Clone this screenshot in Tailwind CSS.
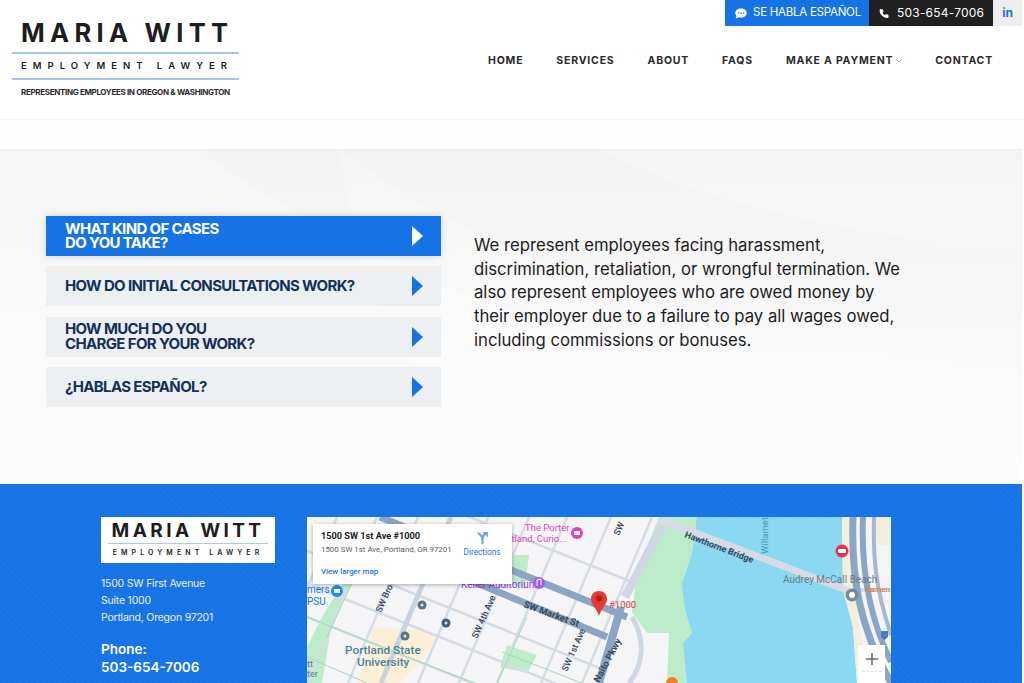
<!DOCTYPE html>
<html lang="en">
<head>
    <meta charset="UTF-8">
    <title>Maria Witt Employment Lawyer</title>
    <script src="https://cdn.jsdelivr.net/npm/@tailwindcss/browser@4"></script>
</head>
<body class="bg-white font-['Inter',sans-serif] overflow-hidden">
<div class="w-[1022px] h-[683px] overflow-hidden">

    <!-- header -->
    <header class="h-[120px] flex justify-between border-b border-[#f4f4f4]">
        <div class="pl-[12px] pt-[22px] w-[239px] shrink-0">
            <div class="h-[30px] pl-[9px] text-[25.500px] leading-[22px] font-bold tracking-[5.300px] text-[#1d1d1f] whitespace-nowrap">MARIA&nbsp;WITT</div>
            <div class="h-[28px] border-y-2 border-[#a3c4f3] pl-[9px] text-[9.500px] leading-[24px] font-semibold tracking-[6px] text-[#1d1d1f] whitespace-nowrap">EMPLOYMENT&nbsp;LAWYER</div>
            <div class="pl-[9px] pt-[6px] text-[8px] leading-[12px] font-bold text-[#2a2a2d] tracking-[-0.33px] whitespace-nowrap">REPRESENTING EMPLOYEES IN OREGON &amp; WASHINGTON</div>
        </div>
        <div class="flex flex-col items-end">
            <div class="flex h-[26px] text-white">
                <div class="w-[144px] bg-[#1673e6] flex items-center pl-[10px] gap-[6px] text-[11.500px] tracking-[-0.25px] whitespace-nowrap">
                    <svg class="w-[12px] h-[11px]" viewBox="0 0 12 11"><path fill="#fff" d="M6 0.5C2.7 0.5 0.3 2.5 0.3 5c0 1.1.5 2.1 1.3 2.9C1.4 8.8.9 9.6.3 10.2c1.3 0 2.5-.4 3.3-1 .7.3 1.5.4 2.4.4 3.3 0 5.7-2 5.7-4.6S9.3.5 6 .5z"/><circle cx="3.6" cy="5" r=".8" fill="#1673e6"/><circle cx="6" cy="5" r=".8" fill="#1673e6"/><circle cx="8.4" cy="5" r=".8" fill="#1673e6"/></svg>
                    <span>SE HABLA ESPAÑOL</span>
                </div>
                <div class="w-[124px] bg-[#202022] flex items-center pl-[10px] gap-[8px] text-[12px] tracking-[0.2px] whitespace-nowrap">
                    <svg class="w-[10px] h-[11px]" viewBox="0 0 24 24"><path fill="#fff" d="M5.500 1.500l4 .8 1.600 5.600-2.700 2.200c1.200 2.700 3.300 4.800 6 6l2.200-2.700 5.600 1.600.8 4c.2 1.500-.8 3.200-2.500 3.500C10.500 23 1 13.500 1.500 4 1.800 2.500 3.800 1.300 5.500 1.500z"/></svg>
                    <span>503-654-7006</span>
                </div>
                <div class="w-[29px] bg-[#eeeeee] flex items-center justify-center text-[12px] font-bold text-[#1673e6]">in</div>
            </div>
            <nav class="flex items-center gap-[33px] pr-[29px] pt-[27px] text-[10.500px] leading-[16px] font-bold tracking-[0.8px] text-[#29292c] whitespace-nowrap">
                <a>HOME</a>
                <a>SERVICES</a>
                <a>ABOUT</a>
                <a>FAQS</a>
                <a class="flex items-center gap-[3px]">MAKE A PAYMENT
                    <svg class="w-[6px] h-[4px]" viewBox="0 0 6 4"><path d="M.5.5 3 3 5.500.5" fill="none" stroke="#6ea4ee" stroke-width="1"/></svg>
                </a>
                <a>CONTACT</a>
            </nav>
        </div>
    </header>

    <div class="h-[29px] bg-[#fefefe]"></div>

    <!-- faq section -->
    <section class="relative h-[335px] border-t border-[#efefef] bg-gradient-to-b from-[#f3f3f3] to-[#fcfcfc]">
        <svg class="absolute inset-0 w-full h-full" viewBox="0 0 1022 334" preserveAspectRatio="none">
            <path fill="#ffffff" fill-opacity=".25" d="M0 0H200C320 90 560 210 1022 300V334H0Z"/>
            <path fill="#ffffff" fill-opacity=".22" d="M340 0C480 110 720 190 1022 220V334H500C400 240 350 100 340 0Z"/>
            <path fill="#ffffff" fill-opacity=".2" d="M600 0C720 60 880 90 1022 100V0Z"/>
        </svg>
        <div class="relative flex pl-[46px] pt-[66px]">
            <div class="w-[395px] flex flex-col gap-[10.400px] shrink-0">
                <a class="h-10 bg-[#1673e6] shadow-[0_0_8px_rgba(0,0,0,0.15)] flex items-center justify-between pl-[19px] pr-[18px] text-[15px] leading-[14.500px] font-bold tracking-[-0.65px] text-white">
                    <span>WHAT KIND OF CASES<br>DO YOU TAKE?</span>
                    <svg class="w-[11px] h-[20px]" viewBox="0 0 11 20"><path fill="#fff" d="M0 0 11 10 0 20Z"/></svg>
                </a>
                <a class="h-10 bg-[#edf0f2] flex items-center justify-between pl-[19px] pr-[18px] text-[15px] leading-[14.500px] font-bold tracking-[-0.65px] text-[#12305a]">
                    <span>HOW DO INITIAL CONSULTATIONS WORK?</span>
                    <svg class="w-[11px] h-[20px]" viewBox="0 0 11 20"><path fill="#1673e6" d="M0 0 11 10 0 20Z"/></svg>
                </a>
                <a class="h-10 bg-[#edf0f2] flex items-center justify-between pl-[19px] pr-[18px] text-[15px] leading-[14.500px] font-bold tracking-[-0.65px] text-[#12305a]">
                    <span>HOW MUCH DO YOU<br>CHARGE FOR YOUR WORK?</span>
                    <svg class="w-[11px] h-[20px]" viewBox="0 0 11 20"><path fill="#1673e6" d="M0 0 11 10 0 20Z"/></svg>
                </a>
                <a class="h-10 bg-[#edf0f2] flex items-center justify-between pl-[19px] pr-[18px] text-[15px] leading-[14.500px] font-bold tracking-[-0.65px] text-[#12305a]">
                    <span>¿HABLAS ESPAÑOL?</span>
                    <svg class="w-[11px] h-[20px]" viewBox="0 0 11 20"><path fill="#1673e6" d="M0 0 11 10 0 20Z"/></svg>
                </a>
            </div>
            <p class="pl-[33px] pt-[18px] text-[16.700px] leading-[23.700px] text-[#1c1c1e] whitespace-nowrap">
                We represent employees facing harassment,<br>
                discrimination, retaliation, or wrongful termination. We<br>
                also represent employees who are owed money by<br>
                their employer due to a failure to pay all wages owed,<br>
                including commissions or bonuses.
            </p>
        </div>
    </section>

    <!-- footer -->
    <footer class="h-[199px] bg-[#1673e6] bg-[repeating-linear-gradient(45deg,#1673e6_0px,#1673e6_2px,#1a76e7_2px,#1a76e7_4px)] flex pl-[101px] pt-[33px] overflow-hidden">
        <div class="w-[174px] shrink-0">
            <div class="h-[46px] bg-white px-[7px] pt-[3px]">
                <div class="h-[24px] text-center text-[19px] leading-[21px] font-bold tracking-[3.400px] text-[#1d1d1f] whitespace-nowrap border-b border-[#a9c8f2]">MARIA&nbsp;WITT</div>
                <div class="text-center text-[7px] leading-[17px] font-semibold tracking-[4.100px] text-[#1d1d1f] whitespace-nowrap">EMPLOYMENT LAWYER</div>
            </div>
            <div class="pt-[12px] text-[10.500px] leading-[17px] tracking-[-0.22px] text-[#eaf2fd] whitespace-nowrap">
                1500 SW First Avenue<br>Suite 1000<br>Portland, Oregon 97201
            </div>
            <div class="pt-[14px] text-[13.500px] leading-[18px] font-semibold text-white">Phone:<br>503-654-7006</div>
        </div>
        <div class="relative ml-[32px] w-[584px] h-[166px] shrink-0 overflow-hidden bg-[#f5f5f7]">
            <svg class="absolute inset-0" width="584" height="166" viewBox="0 0 584 166">
                <!-- blocks -->
                <path fill="#fbefd8" d="M66 110 116 113 130 120 113 146 93 166H50L60 136Z"/>
                <path fill="#bdeccb" d="M0 130 15 100 36 66H45L25 105 15 166H0Z"/>
                <path fill="#bdeccb" d="M200 128 230 138 220 156 193 150Z"/>
                <path fill="#bdeccb" d="M170 38H222L218 72 165 56Z"/>
                <!-- streets running across -->
                <g stroke="#d5dce6" stroke-width="2.500" fill="none">
                    <path d="M0 -65 360 79"/><path d="M0 34 360 178"/><path d="M0 67 300 187"/><path d="M0 100 200 180"/>
                </g>
                <!-- streets running up -->
                <g stroke="#d5dce6" stroke-width="2.500" fill="none">
                    <path d="M30 0 -40 166"/><path d="M70 0 0 166"/><path d="M111 0 41 166"/>
                    <path d="M181 0 111 166"/><path d="M222 0 152 166"/><path d="M260 0 190 166"/>
                    <path d="M304 0 234 166"/><path d="M345 0 275 166"/>
                </g>
                <path d="M144 0 74 166" stroke="#c9d3df" stroke-width="5"/>
                <g stroke="#9fdcb2" stroke-width="1" fill="none">
                    <path d="M0 100 100 140 230 190"/><path d="M0 140 60 166"/><path d="M45 66 20 120"/>
                    <path d="M220 100 190 166"/><path d="M195 135 290 172"/>
                </g>
                <!-- main roads -->
                <path d="M73 0 320 100" stroke="#8ba5c4" stroke-width="7" fill="none"/>
                <path d="M160 62 300 120" stroke="#8ba5c4" stroke-width="7" fill="none"/>
                <!-- east of naito -->
                <path fill="#f5f5f7" d="M362 0H395V166H296Z"/>
                <path fill="#bdeccb" d="M352 0H392L386 37 376 67 378 93 386 117 378 126 382 166H360L362 116 340 116 325 95 330 55Z"/>
                <path d="M356 8 318 80" stroke="#ced7e2" stroke-width="9" fill="none"/>
                <path d="M314 90 292 166" stroke="#8ba5c4" stroke-width="8" fill="none"/>
                <path d="M325 100C340 125 335 150 322 166" stroke="#ced7e2" stroke-width="5" fill="none"/>
                <!-- river -->
                <path fill="#8bd8f2" d="M390 0 385 37 375 67 378 93 385 116 376 126 380 166H550L546 110 536 73 535 0Z"/>
                <path fill="#f4eede" d="M535 0H548L552 110 562 166H550L546 110 536 73Z"/>
                <path fill="#f5f5f7" d="M566 0H584V166H572Z"/>
                <path fill="#f4eede" d="M566 0H584V28H566Z"/>
                <path d="M352 2 542 74" stroke="#d5dce6" stroke-width="7" fill="none"/>
                <path d="M545 73H584" stroke="#d5dce6" stroke-width="4" fill="none"/>
                <path d="M546 0C544 60 552 110 584 166" stroke="#8ba5c4" stroke-width="7" fill="none"/>
                <path d="M556 0C554 50 562 100 584 145" stroke="#8ba5c4" stroke-width="6" fill="none"/>
                <path d="M567 0C566 40 568 70 584 118" stroke="#a5b8cf" stroke-width="4" fill="none"/>
                <!-- labels -->
                <g font-family="Roboto, sans-serif" font-size="9" font-weight="500" fill="#37475c">
                    <text transform="translate(216 90) rotate(20)" font-size="9.500" font-weight="700">SW Market St</text>
                    <text transform="translate(170 122) rotate(-66)">SW 4th Ave</text>
                    <text transform="translate(260 155) rotate(-66)">SW 1st Ave</text>
                    <text transform="translate(74 96) rotate(-66)">SW Bro</text>
                    <text transform="translate(292 166) rotate(-62)" font-size="9.500" font-weight="700">Naito Pkwy</text>
                    <text transform="translate(377 20) rotate(21)" font-weight="700">Hawthorne Bridge</text>
                    <text transform="translate(312 19) rotate(-66)">SW</text>
                </g>
                <text x="38" y="137" font-family="Roboto, sans-serif" font-size="11.800" font-weight="500" fill="#4f7f92">Portland State</text>
                <text x="50" y="149" font-family="Roboto, sans-serif" font-size="11.800" font-weight="500" fill="#4f7f92">University</text>
                <text x="0" y="76" font-family="Roboto, sans-serif" font-size="10" fill="#1a73e8">mers</text>
                <text x="0" y="88" font-family="Roboto, sans-serif" font-size="10" fill="#1a73e8">PSU</text>
                <text x="218" y="14" font-family="Roboto, sans-serif" font-size="9.500" fill="#ea3fb4">The Porter</text>
                <text x="201" y="25" font-family="Roboto, sans-serif" font-size="9.500" fill="#ea3fb4">rtland, Curio...</text>
                <text x="154" y="71" font-family="Roboto, sans-serif" font-size="10" fill="#9334e6">Keller Auditorium</text>
                <text x="302" y="91" font-family="Roboto, sans-serif" font-size="9.500" fill="#d93a2b">#1000</text>
                <text x="476" y="66" font-family="Roboto, sans-serif" font-size="10" fill="#717a85">Audrey McCall Beach</text>
                <text x="558" y="75" font-family="Roboto, sans-serif" font-size="8" fill="#e8710a">Ramen</text>
                <text transform="translate(461 37) rotate(-90)" font-family="Roboto, sans-serif" font-size="9.500" fill="#3f9db5">Willamet</text>
                <text x="0" y="150" font-family="Roboto, sans-serif" font-size="9" fill="#4f7f92">tt</text>
                <text x="0" y="160" font-family="Roboto, sans-serif" font-size="9" fill="#4f7f92">ter</text>
                <!-- pois -->
                <circle cx="270" cy="16" r="6" fill="#ea3fb4"/><rect x="267" y="14" width="6" height="4" fill="#fff"/>
                <circle cx="232" cy="66" r="6" fill="#a45fe8"/><path d="M230 69V63L234 62V68" stroke="#fff" fill="none"/>
                <circle cx="30" cy="74" r="6" fill="#1a8cf0"/><rect x="27" y="72" width="6" height="4" fill="#fff"/>
                <circle cx="535" cy="34" r="6.500" fill="#e8304f"/><rect x="531" y="32" width="8" height="4" rx="1" fill="#fff"/>
                <circle cx="545" cy="78" r="6.500" fill="#78899a"/><circle cx="545" cy="78" r="3" fill="#fff"/>
                <circle cx="365" cy="166" r="6" fill="#f2811d"/>
                <circle cx="115" cy="88" r="4.500" fill="#5f7286"/><circle cx="115" cy="88" r="1.500" fill="#dfe5ea"/>
                <circle cx="139" cy="106" r="4.500" fill="#3d5d7e"/><circle cx="139" cy="106" r="1.500" fill="#dfe5ea"/>
                <circle cx="98" cy="119" r="4.500" fill="#5f7286"/><circle cx="98" cy="119" r="1.500" fill="#dfe5ea"/>
                <path d="M574 114h7v6l-3.500 3-3.500-3z" fill="#4a7bc8"/>
                <!-- pin -->
                <path fill="#e8392f" d="M292 74c-4.500 0-8 3.500-8 8 0 5.500 5.500 9 8 17 2.500-8 8-11.500 8-17 0-4.500-3.500-8-8-8z"/>
                <circle cx="292" cy="81.500" r="3" fill="#a3211c"/>
            </svg>

            <!-- place card -->
            <div class="absolute left-[6px] top-[7px] w-[199px] h-[60px] bg-white shadow-[0_1px_4px_rgba(0,0,0,0.3)] font-['Roboto',sans-serif]">
                <div class="absolute left-[8px] top-[5px] text-[9.200px] leading-[14px] font-bold text-[#202124] whitespace-nowrap">1500 SW 1st Ave #1000</div>
                <div class="absolute left-[8px] top-[20px] text-[7.900px] leading-[12px] text-[#5b5b5b] whitespace-nowrap">1500 SW 1st Ave, Portland, OR 97201</div>
                <div class="absolute left-[8px] top-[42px] text-[7.900px] leading-[12px] font-medium text-[#1a73e8] whitespace-nowrap">View larger map</div>
                <div class="absolute left-[150px] top-[7px] w-[38px] flex flex-col items-center text-[8.200px] leading-[12px] text-[#1a73e8]">
                    <svg class="w-[12px] h-[13px] mb-[2px]" viewBox="0 0 12 13"><path fill="none" stroke="#6ba6f5" stroke-width="2.200" d="M6.500 13V8C6.500 5.500 5 4 2 2M6.500 8C6.500 5 8 3.500 10 2"/><path fill="#6ba6f5" d="M6.500 1H12V6.500Z"/></svg>
                    <span>Directions</span>
                </div>
            </div>

            <!-- zoom control -->
            <div class="absolute left-[551px] top-[128px] w-[27px] h-[38px] bg-white flex flex-col items-center">
                <svg class="mt-[8px] w-[12px] h-[12px]" viewBox="0 0 12 12"><path d="M6 0V12M0 6H12" stroke="#666" stroke-width="1.500"/></svg>
                <div class="mt-[6px] w-[20px] border-t border-[#e6e6e6]"></div>
            </div>
        </div>
    </footer>
</div>
</body>
</html>
